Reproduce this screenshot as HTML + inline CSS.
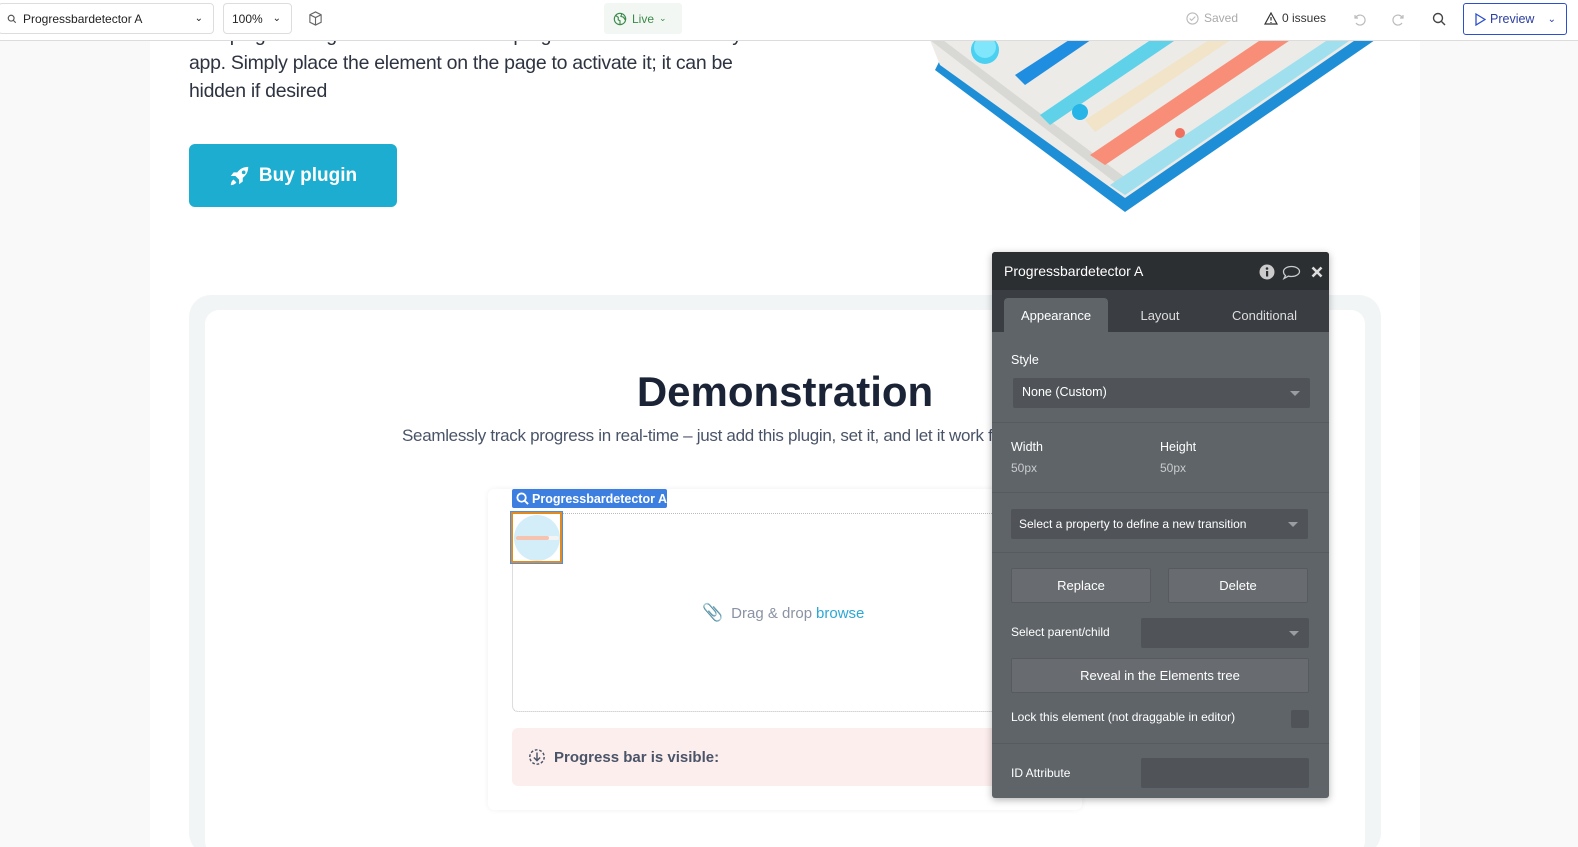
<!DOCTYPE html>
<html style="width:1578px;height:847px;overflow:hidden"><head><meta charset="utf-8">
<style>
*{box-sizing:border-box;margin:0;padding:0}
body{width:1578px;height:847px;overflow:hidden;background:#f9f9f9;font-family:"Liberation Sans",sans-serif;position:relative}
.abs{position:absolute}
.page{left:150px;top:0;width:1270px;height:847px;background:#fff}
.top{left:0;top:0;width:1578px;height:41px;background:#fff;border-bottom:1px solid #dcdcdc;z-index:5}
.box{border:1px solid #ddd;border-radius:4px;background:#fff;font-size:12px;color:#222;display:flex;align-items:center}
.para{left:189px;top:21px;width:600px;font-size:19.5px;line-height:28px;color:#2d3340;letter-spacing:-0.3px}
.buy{left:189px;top:144px;width:208px;height:63px;background:#1cadd0;border-radius:6px;color:#fff;font-weight:bold;font-size:19px;display:flex;align-items:center;justify-content:center;gap:8px}
.demo-o{left:189px;top:295px;width:1192px;height:560px;background:#f1f5f6;border-radius:22px}
.demo-i{left:205px;top:310px;width:1160px;height:545px;background:#fff;border-radius:14px}
h1{position:absolute;left:560px;top:368px;width:450px;text-align:center;font-size:42px;font-weight:bold;color:#1b2437}
.sub{left:402px;top:426px;font-size:17px;color:#4a5468;white-space:nowrap;letter-spacing:-0.3px}
.card{left:488px;top:489px;width:594px;height:321px;background:#fff;border-radius:6px;box-shadow:0 0 6px rgba(0,0,0,.06)}
.drop{left:512px;top:513px;width:520px;height:199px;border:1px solid #ddd;border-top:1px dotted #bbb;border-bottom:1px dotted #bbb;border-radius:0 0 6px 6px}
.tag{left:512px;top:489px;width:155px;height:19px;background:#3d7fe0;color:#fff;font-size:12.5px;font-weight:bold;display:flex;align-items:center;padding-left:4px;gap:3px;border-radius:2px}
.sel{left:511px;top:512px;width:51px;height:51px;border:2px solid #e38b1e;outline:1px solid #4a90e2;background:#fff}
.alert{left:512px;top:728px;width:500px;height:58px;background:#fdeeee;border-radius:6px;font-size:15px;font-weight:bold;color:#4a5468;display:flex;align-items:center;padding-left:16px;gap:8px}
.panel{left:992px;top:252px;width:337px;height:546px;background:#5f6468;border-radius:3px;box-shadow:0 2px 8px rgba(0,0,0,.3);color:#fff;font-size:12.5px;overflow:hidden;z-index:6}
.ph{left:0;top:0;width:337px;height:38px;background:#2b2f32;font-size:14px;padding:11px 12px}
.tabs{left:0;top:38px;width:337px;height:42px;background:#3a3e42}
.tab{position:absolute;top:8px;height:34px;font-size:13px;color:#ddd;display:flex;align-items:center;justify-content:center}
.pin{background:#505458;border-radius:2px}
.btn{background:#686c70;border:1px solid #575b5f;border-radius:2px;display:flex;align-items:center;justify-content:center;font-size:13px}
.hr{height:1px;background:#575b5f;left:0;width:337px}
.tri{position:absolute;right:10px;top:50%;margin-top:-2px;border:5px solid transparent;border-top:5px solid #9a9ea2;border-bottom:0}
.light{color:#c9ccce}
</style></head><body>
<div class="abs page"></div>
<div class="abs para">This plugin changes its state when the progress bar is initiated in your app. Simply place the element on the page to activate it; it can be hidden if desired</div>

<svg class="abs" style="left:925px;top:20px" width="455" height="195" viewBox="0 0 455 195">
<path d="M10 50 L200 192 L450 20 L440 10 L200 175 L15 40Z" fill="#1e8fd6"/>
<path d="M5 20 L15 45 L200 178 L442 12 L5 12Z" fill="#ecebe8"/>
<path d="M5 20 L200 170 L210 165 L10 14Z" fill="#d8d8d4"/>
<circle cx="60" cy="30" r="14" fill="#4ad0f0"/><circle cx="60" cy="27" r="11" fill="#7fe6fb"/>
<path d="M90 55 L175 0 L195 0 L100 65Z" fill="#1f8ee0"/>
<path d="M115 95 L255 0 L280 0 L125 105Z" fill="#5fd2ea"/>
<path d="M160 100 L315 0 L335 0 L170 112Z" fill="#f1e4c9"/>
<circle cx="155" cy="92" r="8" fill="#27b4e6"/>
<path d="M165 135 L365 0 L395 0 L180 145Z" fill="#f88e78"/>
<path d="M185 165 L425 5 L440 10 L200 175Z" fill="#9fdfee"/>
<circle cx="255" cy="113" r="5" fill="#f07060"/>
</svg>

<div class="abs buy"><svg width="22" height="22" viewBox="0 0 24 24" fill="#fff"><path d="M21 2c-5 0-9 2-12 6H5l-3 4h5l4 4v5l4-3v-4c4-3 6-7 6-12zM16 6a2 2 0 110 4 2 2 0 010-4zM5 16c-2 1-3 4-3 6 2 0 5-1 6-3z"/></svg>Buy plugin</div>

<div class="abs demo-o"></div>
<div class="abs demo-i"></div>
<h1>Demonstration</h1>
<div class="abs sub">Seamlessly track progress in real-time – just add this plugin, set it, and let it work for you and your app users</div>
<div class="abs card"></div>
<div class="abs drop"></div>
<div class="abs" style="left:702px;top:603px;font-size:15px;color:#8a93a3;display:flex;gap:8px;align-items:center"><span style="color:#bbb;font-size:17px">&#128206;</span>Drag &amp; drop <span style="color:#2ba8d4;margin-left:-4px">browse</span></div>
<div class="abs tag"><svg width="13" height="13" viewBox="0 0 14 14" fill="none" stroke="#fff" stroke-width="2"><circle cx="6" cy="6" r="4.5"/><path d="M9 9l4 4"/></svg>Progressbardetector A</div>
<div class="abs sel"><div style="position:absolute;left:1px;top:1px;width:46px;height:46px;border-radius:50%;background:#d3eef9"></div><div style="position:absolute;left:3px;top:22px;width:43px;height:4px;background:#f4f4f4;border-radius:2px"></div><div style="position:absolute;left:3px;top:22px;width:33px;height:4px;background:#f6c3b0;border-radius:2px"></div></div>
<div class="abs alert"><svg width="18" height="18" viewBox="0 0 20 20" fill="none" stroke="#4a5468" stroke-width="1.6"><circle cx="10" cy="10" r="8" stroke-dasharray="3 2"/><path d="M10 5v9M6.5 10.5L10 14l3.5-3.5"/></svg>Progress bar is visible:</div>

<div class="abs top">
 <div class="abs box" style="left:-2px;top:3px;width:216px;height:31px;padding-left:8px;gap:6px"><svg width="10" height="10" viewBox="0 0 12 12" fill="none" stroke="#555" stroke-width="1.4"><circle cx="5" cy="5" r="3.5"/><path d="M7.5 7.5l3 3"/></svg>Progressbardetector A<span style="position:absolute;right:10px;font-size:10px">&#8964;</span></div>
 <div class="abs box" style="left:223px;top:3px;width:69px;height:31px;padding-left:8px">100%<span style="position:absolute;right:10px;font-size:10px">&#8964;</span></div>
 <svg class="abs" style="left:308px;top:11px" width="15" height="15" viewBox="0 0 16 16" fill="none" stroke="#666" stroke-width="1.2"><path d="M8 1l6 3v8l-6 3-6-3V4zM2 4l6 3 6-3M8 7v8"/></svg>
 <div class="abs" style="left:604px;top:3px;width:78px;height:31px;background:#f3f7f3;border-radius:3px;color:#3a8a4a;font-size:12px;display:flex;align-items:center;padding-left:9px;gap:5px"><svg width="14" height="14" viewBox="0 0 16 16" fill="none" stroke="#3a8a4a" stroke-width="1.3"><circle cx="8" cy="8" r="6.5"/><path d="M3 4l3 2v3l2 1v4M10 2l-1 3 3 1 2 3"/></svg>Live <span style="font-size:9px">&#8964;</span></div>
 <div class="abs" style="left:1186px;top:11px;font-size:12px;color:#aaa;display:flex;gap:5px;align-items:center"><svg width="13" height="13" viewBox="0 0 14 14" fill="none" stroke="#bbb" stroke-width="1.2"><circle cx="7" cy="7" r="6"/><path d="M4 7l2 2 4-4"/></svg>Saved</div>
 <div class="abs" style="left:1264px;top:11px;font-size:12px;color:#333;display:flex;gap:4px;align-items:center"><svg width="14" height="13" viewBox="0 0 14 13" fill="none" stroke="#333" stroke-width="1.2"><path d="M7 1l6 11H1z M7 5v3.5M7 10v1"/></svg>0 issues</div>
 <svg class="abs" style="left:1352px;top:12px" width="14" height="14" viewBox="0 0 14 14" fill="none" stroke="#bbb" stroke-width="1.2"><path d="M3 3v3h3M3.5 6A5 5 0 1 1 4 11"/></svg>
 <svg class="abs" style="left:1392px;top:12px" width="14" height="14" viewBox="0 0 14 14" fill="none" stroke="#bbb" stroke-width="1.2"><path d="M11 3v3H8M10.5 6A5 5 0 1 0 10 11"/></svg>
 <svg class="abs" style="left:1432px;top:12px" width="14" height="14" viewBox="0 0 14 14" fill="none" stroke="#444" stroke-width="1.4"><circle cx="6" cy="6" r="4.5"/><path d="M9.5 9.5l3.5 3.5"/></svg>
 <div class="abs" style="left:1463px;top:3px;width:104px;height:32px;border:1px solid #2b4fcf;border-radius:3px;color:#2b3fa0;font-size:12.5px;display:flex;align-items:center;padding-left:10px;gap:4px"><svg width="12" height="13" viewBox="0 0 12 13" fill="none" stroke="#2b4fcf" stroke-width="1.3"><path d="M2 1l9 5.5L2 12z"/></svg>Preview<span style="position:absolute;right:10px;font-size:10px">&#8964;</span></div>
</div>

<div class="abs panel">
 <div class="abs ph">Progressbardetector A</div>
 <svg class="abs" style="left:267px;top:12px" width="16" height="16" viewBox="0 0 16 16"><circle cx="8" cy="8" r="7.5" fill="#ccc"/><rect x="7" y="7" width="2.2" height="5.5" fill="#2b2f32"/><circle cx="8" cy="4.5" r="1.3" fill="#2b2f32"/></svg>
 <svg class="abs" style="left:290px;top:13px" width="19" height="15" viewBox="0 0 19 15" fill="none" stroke="#ccc" stroke-width="1.3"><path d="M9.5 1.5c4.5 0 8 2.3 8 5s-3.5 5-8 5c-1 0-2-.1-3-.4L2 13.5l1.5-3C2 9.5 1.5 8 1.5 6.5c0-2.7 3.5-5 8-5z"/></svg>
 <svg class="abs" style="left:319px;top:14px" width="12" height="12" viewBox="0 0 12 12" stroke="#ddd" stroke-width="2.6"><path d="M1.5 1.5l9 9M10.5 1.5l-9 9"/></svg>
 <div class="abs tabs"></div>
 <div class="tab" style="left:12px;width:104px;background:#5f6468;border-radius:4px 4px 0 0;top:46px;color:#fff">Appearance</div>
 <div class="tab" style="left:128px;width:80px;top:46px">Layout</div>
 <div class="tab" style="left:225px;width:95px;top:46px">Conditional</div>
 <div class="abs" style="left:19px;top:101px">Style</div>
 <div class="abs pin" style="left:21px;top:126px;width:297px;height:30px;padding:7px 9px">None (Custom)<span class="tri"></span></div>
 <div class="abs hr" style="top:170px"></div>
 <div class="abs" style="left:19px;top:188px">Width</div>
 <div class="abs" style="left:168px;top:188px">Height</div>
 <div class="abs light" style="left:19px;top:209px;font-size:12px">50px</div>
 <div class="abs light" style="left:168px;top:209px;font-size:12px">50px</div>
 <div class="abs hr" style="top:240px"></div>
 <div class="abs pin" style="left:19px;top:257px;width:297px;height:30px;padding:8px 8px;font-size:12px">Select a property to define a new transition<span class="tri"></span></div>
 <div class="abs hr" style="top:300px"></div>
 <div class="abs btn" style="left:19px;top:316px;width:140px;height:35px">Replace</div>
 <div class="abs btn" style="left:176px;top:316px;width:140px;height:35px">Delete</div>
 <div class="abs" style="left:19px;top:373px;font-size:12px">Select parent/child</div>
 <div class="abs pin" style="left:149px;top:366px;width:168px;height:30px"><span class="tri"></span></div>
 <div class="abs btn" style="left:19px;top:406px;width:298px;height:35px">Reveal in the Elements tree</div>
 <div class="abs" style="left:19px;top:458px;font-size:12px">Lock this element (not draggable in editor)</div>
 <div class="abs pin" style="left:299px;top:458px;width:18px;height:18px"></div>
 <div class="abs hr" style="top:491px"></div>
 <div class="abs" style="left:19px;top:514px;font-size:12px">ID Attribute</div>
 <div class="abs pin" style="left:149px;top:506px;width:168px;height:30px"></div>
</div>
</body></html>
